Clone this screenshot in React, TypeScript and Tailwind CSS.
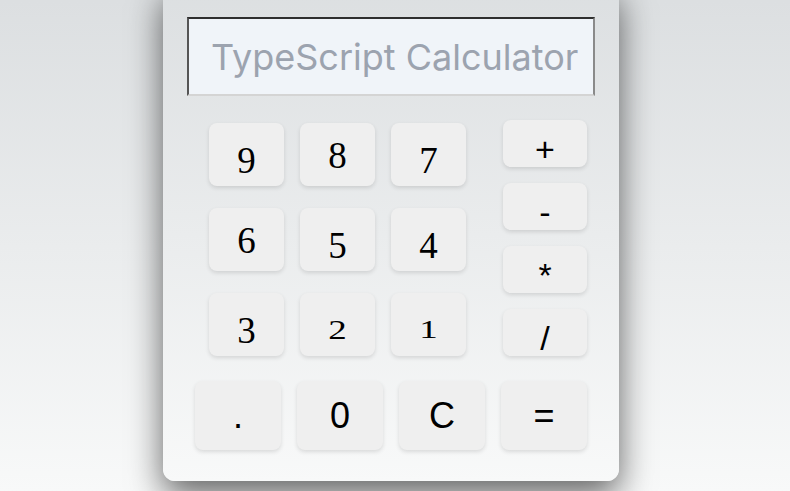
const digitRows = [
  ["9", "8", "7"],
  ["6", "5", "4"],
  ["3", "2", "1"],
];

const operators = ["+", "-", "*", "/"];
const bottomKeys = [".", "0", "C", "="];

// fake Georgia-style old-style figures with a lining serif face
const digitShift: Record<string, string> = {
  "6": "translate-y-[1px]",
  "8": "translate-y-[1px]",
  "3": "translate-y-[6px]",
  "4": "translate-y-[6px]",
  "5": "translate-y-[6px]",
  "7": "translate-y-[6px]",
  "9": "translate-y-[6px]",
  "1": "translate-y-[5px] scale-y-[0.68]",
  "2": "translate-y-[5px] scale-y-[0.74]",
};

function Key({ className, children }: { className: string; children: React.ReactNode }) {
  return (
    <button
      className={`flex items-center justify-center rounded-lg bg-[#efefef] text-black shadow-[0_2px_4px_rgba(0,0,0,0.12)] ${className}`}
    >
      {children}
    </button>
  );
}

export default function App() {
  return (
    <div className="flex h-[491px] justify-center overflow-hidden bg-gradient-to-b from-[#dcdfe1] to-[#f8f9f9] pr-2">
      <div className="-mt-4 flex h-[497px] w-[456px] flex-col rounded-xl bg-gradient-to-b from-[#dcdfe1] to-[#f8f9f9] px-6 pt-[33px] shadow-[0_14px_34px_rgba(0,0,0,0.6)]">
        <div className="flex h-[79px] w-full items-center border-2 border-t-[#2f2f2f] border-l-[#555] border-r-[#8a8a8a] border-b-[#d4d4d4] bg-[#f0f4f9] pl-[22px] font-['Inter',sans-serif] text-[36px] text-[#9ca3af]">
          TypeScript Calculator
        </div>

        <div className="mt-6 flex justify-between px-2">
          <div className="ml-[14px] mt-[3px] grid grid-cols-[75px_75px_75px] gap-x-4 gap-y-[22px]">
            {digitRows.flat().map((d) => (
              <Key key={d} className="h-[63px] font-['Liberation_Serif',serif] text-[37px] leading-none">
                <span className={`inline-block ${digitShift[d]}`}>{d}</span>
              </Key>
            ))}
          </div>
          <div className="flex w-[84px] flex-col gap-4">
            {operators.map((op) => (
              <Key key={op} className="h-[47px] pt-[10px] font-['Liberation_Sans',sans-serif] text-[34px] leading-none">
                {op}
              </Key>
            ))}
          </div>
        </div>

        <div className="mt-[25px] flex gap-4 px-2">
          {bottomKeys.map((k) => (
            <Key key={k} className="h-[69px] w-[86px] font-['Liberation_Sans',sans-serif] text-[36px] leading-none">
              {k}
            </Key>
          ))}
        </div>
      </div>
    </div>
  );
}
